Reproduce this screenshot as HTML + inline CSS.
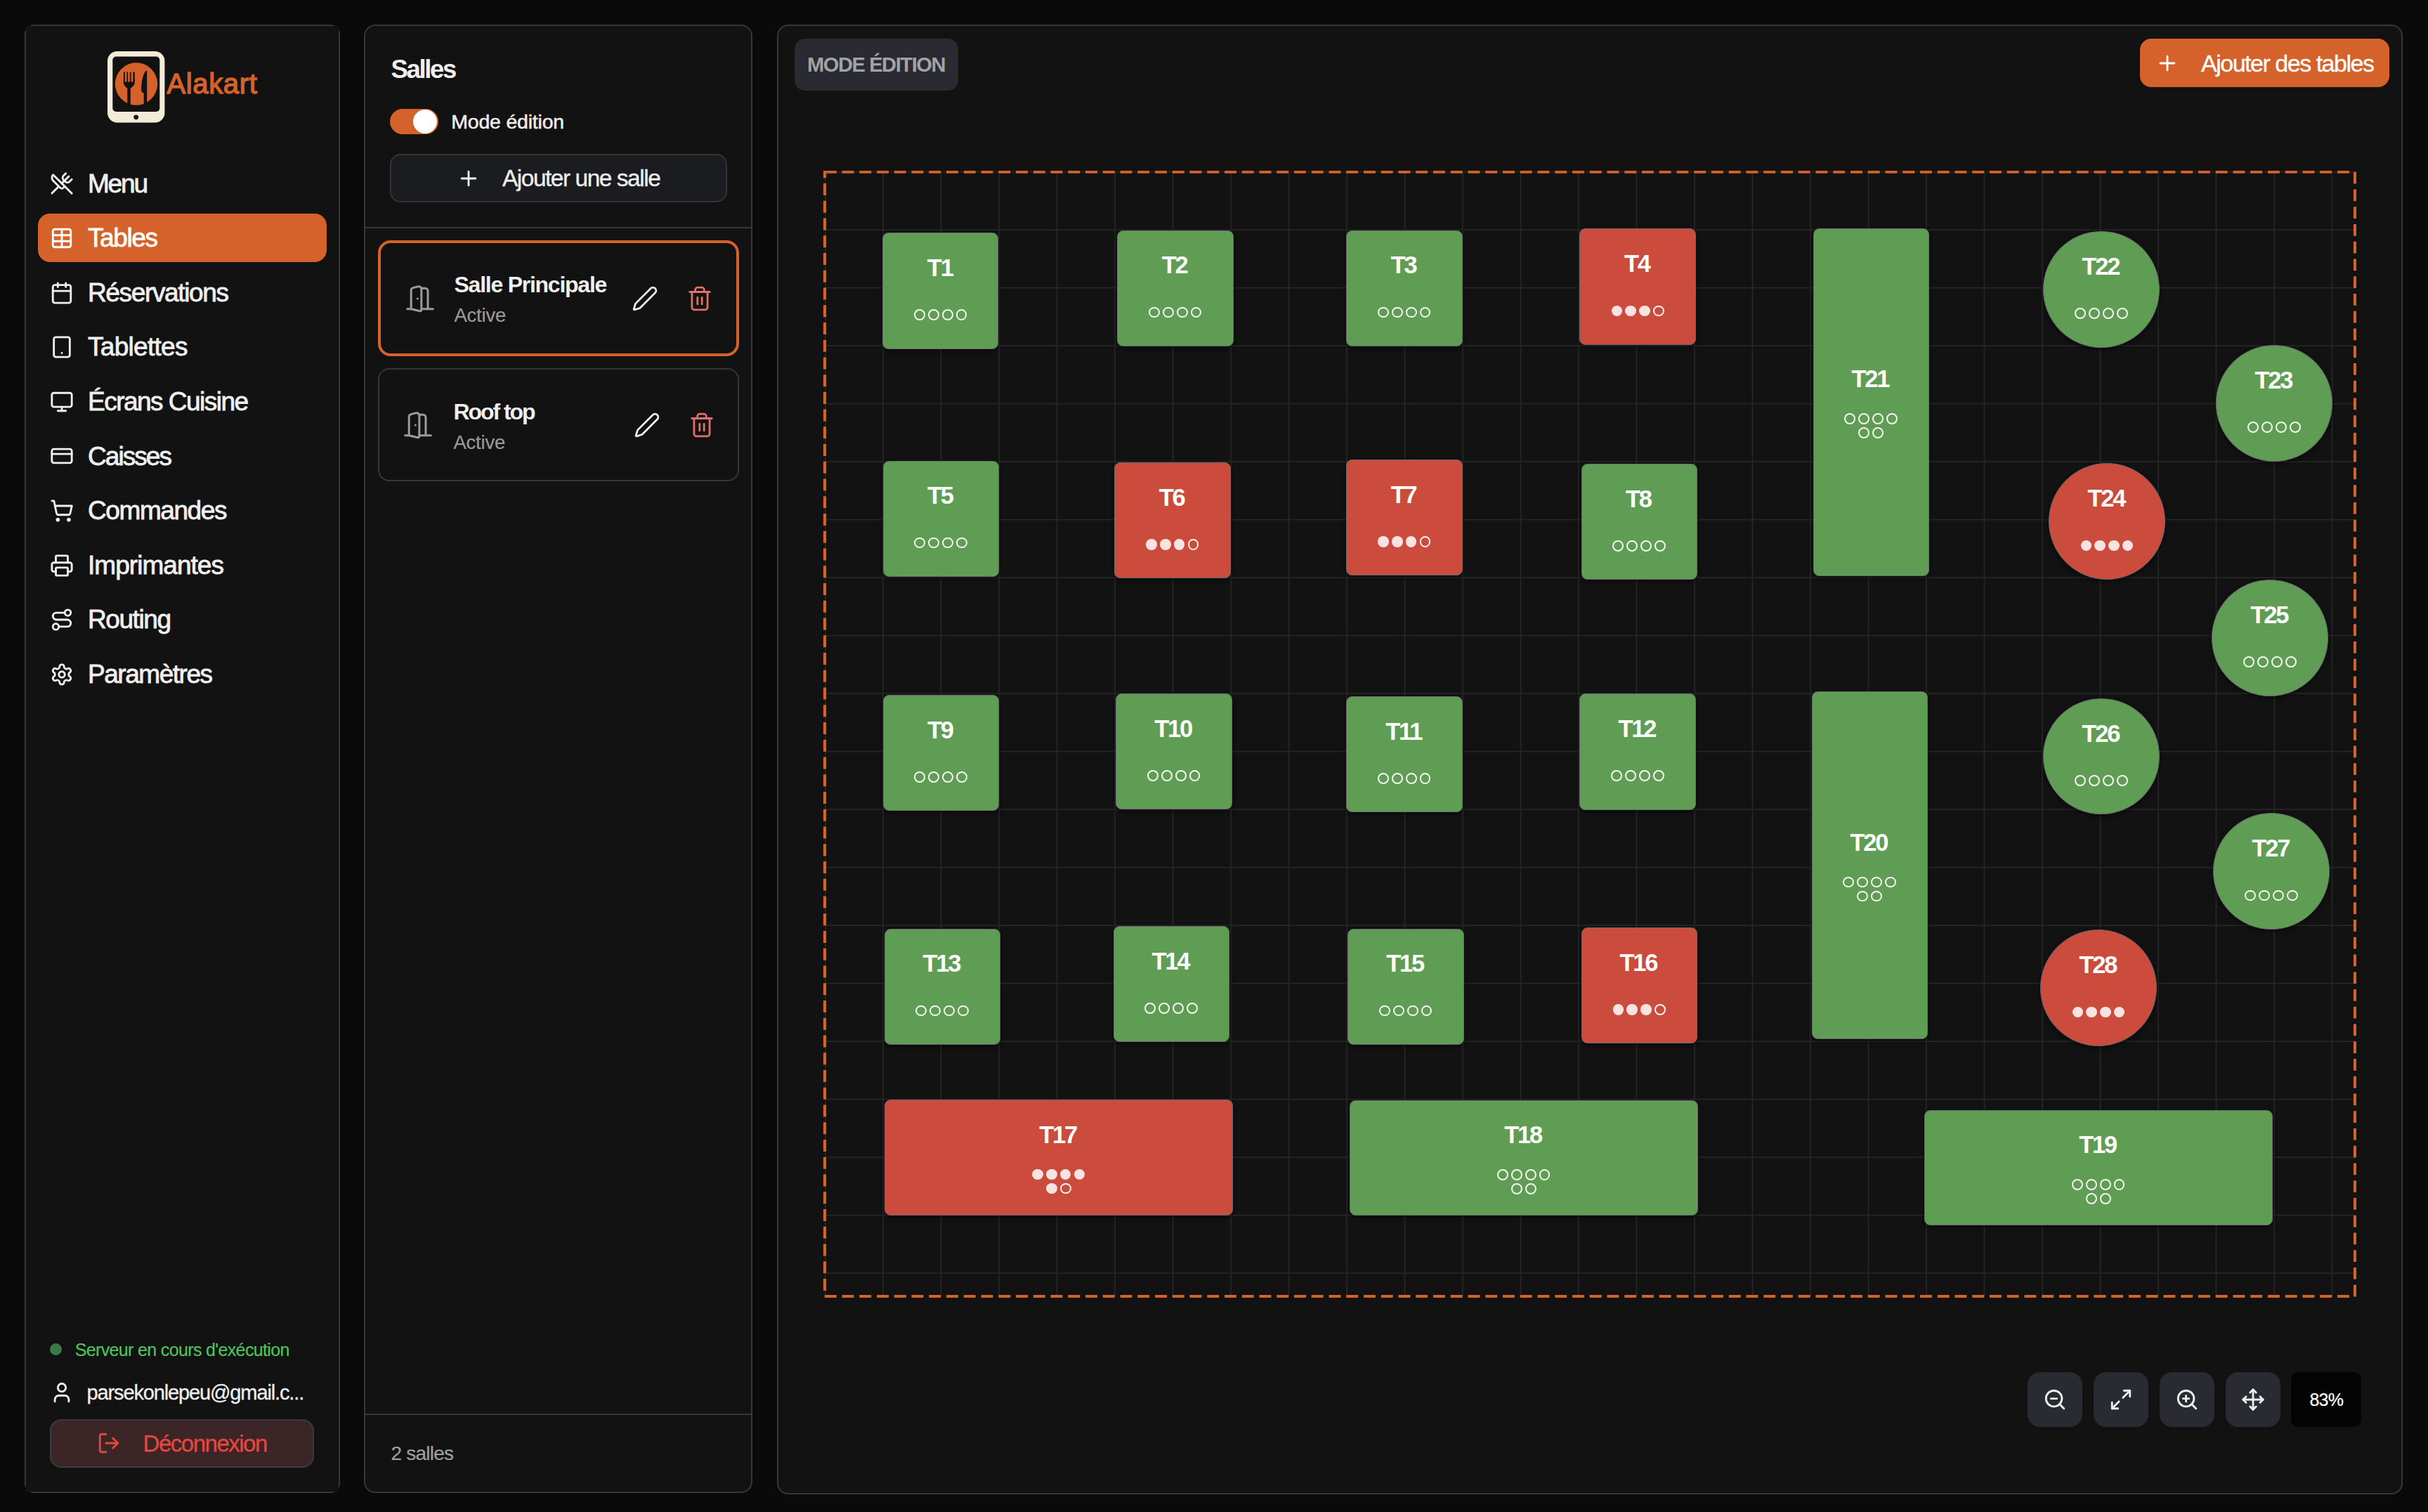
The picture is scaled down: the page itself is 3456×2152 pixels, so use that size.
<!DOCTYPE html>
<html><head><meta charset="utf-8"><style>
html,body{margin:0;padding:0;}
body{width:3456px;height:2152px;background:#0a0a0a;position:relative;overflow:hidden;font-family:"Liberation Sans",sans-serif;}
.b{position:absolute;}
.t{position:absolute;white-space:nowrap;}
.ic{position:absolute;display:block;}
</style></head><body>
<div class="b" style="left:35px;top:35px;width:449px;height:2090px;background:#121212;border:2px solid #36373c;border-radius:14px;box-sizing:border-box"></div>
<div class="b" style="left:37px;top:37px;width:445px;height:2086px;background:#121212"></div>
<div class="b" style="left:518px;top:35px;width:553px;height:2090px;background:#121212;border:2px solid #36373c;border-radius:16px;box-sizing:border-box"></div>
<div class="b" style="left:1106px;top:35px;width:2314px;height:2092px;background:#121212;border:2px solid #36373c;border-radius:16px;box-sizing:border-box"></div>
<svg class="ic" style="left:153px;top:72.5px" width="82" height="102" viewBox="0 0 82 102">
<rect x="0" y="0" width="81.4" height="101.5" rx="14" fill="#f3ead8"/>
<rect x="7.3" y="7.5" width="67" height="78.4" rx="5" fill="#121212"/>
<circle cx="40.7" cy="93.8" r="3.4" fill="#121212"/>
<circle cx="41" cy="46.5" r="30.2" fill="#d5612b"/>
<path fill="#121212" d="M23,29.6 L24.8,29.6 L24.8,43.5 L27.4,43.5 L27.4,29.6 L29.1,29.6 L29.1,43.5 L31.8,43.5 L31.8,29.6 L33.6,29.6 L33.6,43.5 L36.4,43.5 L36.4,29.6 L38.7,29.6 L38.9,44.5 Q38.7,48.5 32.7,52.8 L32.7,80 L28.3,80 L28.3,52.8 Q22.8,48.5 22.8,44.5 Z"/>
<path fill="#121212" d="M56.2,28 L56.2,80 L51.7,80 L51.7,60 L48.2,57 C47.8,45 50,34 54.2,28.2 Q55.6,26.8 56.2,28 Z"/>
</svg>
<div class="t" style="left:237.40px;top:99.04px;font-size:40px;line-height:40px;color:#d5612b;font-weight:400;letter-spacing:0.667px;-webkit-text-stroke:1.4px #d5612b;">Alakart</div>
<div class="b" style="left:54px;top:304px;width:411px;height:69px;background:#d5612b;border-radius:17px"></div>
<svg class="ic" style="left:71.30px;top:244.30px;" width="34" height="34" viewBox="0 0 24 24" fill="none" stroke="#efefef" stroke-width="2" stroke-linecap="round" stroke-linejoin="round"><path d="m16 2-2.3 2.3a3 3 0 0 0 0 4.2l1.8 1.8a3 3 0 0 0 4.2 0L22 8"/><path d="M15 15 3.3 3.3a4.2 4.2 0 0 0 0 6l7.3 7.3c.7.7 2 .7 2.8 0L15 15Zm0 0 7 7"/><path d="m2.1 21.8 6.4-6.3"/><path d="m19 5-7 7"/></svg>
<div class="t" style="left:125.00px;top:242.68px;font-size:37px;line-height:37px;color:#efefef;font-weight:400;letter-spacing:-2.200px;-webkit-text-stroke:0.8px #efefef;">Menu</div>
<svg class="ic" style="left:71.30px;top:321.90px;" width="34" height="34" viewBox="0 0 24 24" fill="none" stroke="#ffffff" stroke-width="2" stroke-linecap="round" stroke-linejoin="round"><path d="M12 3v18"/><rect width="18" height="18" x="3" y="3" rx="2"/><path d="M3 9h18"/><path d="M3 15h18"/></svg>
<div class="t" style="left:125.00px;top:320.28px;font-size:37px;line-height:37px;color:#ffffff;font-weight:400;letter-spacing:-1.400px;-webkit-text-stroke:0.8px #ffffff;">Tables</div>
<svg class="ic" style="left:71.30px;top:399.50px;" width="34" height="34" viewBox="0 0 24 24" fill="none" stroke="#efefef" stroke-width="2" stroke-linecap="round" stroke-linejoin="round"><path d="M8 2v4"/><path d="M16 2v4"/><rect width="18" height="18" x="3" y="4" rx="2"/><path d="M3 10h18"/></svg>
<div class="t" style="left:125.00px;top:397.88px;font-size:37px;line-height:37px;color:#efefef;font-weight:400;letter-spacing:-1.355px;-webkit-text-stroke:0.8px #efefef;">Réservations</div>
<svg class="ic" style="left:71.30px;top:477.10px;" width="34" height="34" viewBox="0 0 24 24" fill="none" stroke="#efefef" stroke-width="2" stroke-linecap="round" stroke-linejoin="round"><rect width="16" height="20" x="4" y="2" rx="2" ry="2"/><line x1="12" x2="12.01" y1="18" y2="18"/></svg>
<div class="t" style="left:125.00px;top:475.48px;font-size:37px;line-height:37px;color:#efefef;font-weight:400;letter-spacing:-0.700px;-webkit-text-stroke:0.8px #efefef;">Tablettes</div>
<svg class="ic" style="left:71.30px;top:554.70px;" width="34" height="34" viewBox="0 0 24 24" fill="none" stroke="#efefef" stroke-width="2" stroke-linecap="round" stroke-linejoin="round"><rect width="20" height="14" x="2" y="3" rx="2"/><line x1="8" x2="16" y1="21" y2="21"/><line x1="12" x2="12" y1="17" y2="21"/></svg>
<div class="t" style="left:125.00px;top:553.08px;font-size:37px;line-height:37px;color:#efefef;font-weight:400;letter-spacing:-1.523px;-webkit-text-stroke:0.8px #efefef;">Écrans Cuisine</div>
<svg class="ic" style="left:71.30px;top:632.30px;" width="34" height="34" viewBox="0 0 24 24" fill="none" stroke="#efefef" stroke-width="2" stroke-linecap="round" stroke-linejoin="round"><rect width="20" height="14" x="2" y="5" rx="2"/><line x1="2" x2="22" y1="10" y2="10"/></svg>
<div class="t" style="left:125.00px;top:630.68px;font-size:37px;line-height:37px;color:#efefef;font-weight:400;letter-spacing:-1.933px;-webkit-text-stroke:0.8px #efefef;">Caisses</div>
<svg class="ic" style="left:71.30px;top:709.90px;" width="34" height="34" viewBox="0 0 24 24" fill="none" stroke="#efefef" stroke-width="2" stroke-linecap="round" stroke-linejoin="round"><circle cx="8" cy="21" r="1"/><circle cx="19" cy="21" r="1"/><path d="M2.05 2.05h2l2.66 12.42a2 2 0 0 0 2 1.58h9.78a2 2 0 0 0 1.95-1.57l1.65-7.43H5.12"/></svg>
<div class="t" style="left:125.00px;top:708.28px;font-size:37px;line-height:37px;color:#efefef;font-weight:400;letter-spacing:-1.413px;-webkit-text-stroke:0.8px #efefef;">Commandes</div>
<svg class="ic" style="left:71.30px;top:787.50px;" width="34" height="34" viewBox="0 0 24 24" fill="none" stroke="#efefef" stroke-width="2" stroke-linecap="round" stroke-linejoin="round"><path d="M6 18H4a2 2 0 0 1-2-2v-5a2 2 0 0 1 2-2h16a2 2 0 0 1 2 2v5a2 2 0 0 1-2 2h-2"/><path d="M6 9V3a1 1 0 0 1 1-1h10a1 1 0 0 1 1 1v6"/><rect x="6" y="14" width="12" height="8" rx="1"/></svg>
<div class="t" style="left:125.00px;top:785.88px;font-size:37px;line-height:37px;color:#efefef;font-weight:400;letter-spacing:-0.960px;-webkit-text-stroke:0.8px #efefef;">Imprimantes</div>
<svg class="ic" style="left:71.30px;top:865.10px;" width="34" height="34" viewBox="0 0 24 24" fill="none" stroke="#efefef" stroke-width="2" stroke-linecap="round" stroke-linejoin="round"><circle cx="6" cy="19" r="3"/><path d="M9 19h8.5a3.5 3.5 0 0 0 0-7h-11a3.5 3.5 0 0 1 0-7H15"/><circle cx="18" cy="5" r="3"/></svg>
<div class="t" style="left:125.00px;top:863.48px;font-size:37px;line-height:37px;color:#efefef;font-weight:400;letter-spacing:-1.417px;-webkit-text-stroke:0.8px #efefef;">Routing</div>
<svg class="ic" style="left:71.30px;top:942.70px;" width="34" height="34" viewBox="0 0 24 24" fill="none" stroke="#efefef" stroke-width="2" stroke-linecap="round" stroke-linejoin="round"><path d="M12.22 2h-.44a2 2 0 0 0-2 2v.18a2 2 0 0 1-1 1.73l-.43.25a2 2 0 0 1-2 0l-.15-.08a2 2 0 0 0-2.73.73l-.22.38a2 2 0 0 0 .73 2.73l.15.1a2 2 0 0 1 1 1.72v.51a2 2 0 0 1-1 1.74l-.15.09a2 2 0 0 0-.73 2.73l.22.38a2 2 0 0 0 2.73.73l.15-.08a2 2 0 0 1 2 0l.43.25a2 2 0 0 1 1 1.73V20a2 2 0 0 0 2 2h.44a2 2 0 0 0 2-2v-.18a2 2 0 0 1 1-1.73l.43-.25a2 2 0 0 1 2 0l.15.08a2 2 0 0 0 2.73-.73l.22-.39a2 2 0 0 0-.73-2.73l-.15-.08a2 2 0 0 1-1-1.74v-.5a2 2 0 0 1 1-1.74l.15-.09a2 2 0 0 0 .73-2.73l-.22-.38a2 2 0 0 0-2.73-.73l-.15.08a2 2 0 0 1-2 0l-.43-.25a2 2 0 0 1-1-1.73V4a2 2 0 0 0-2-2z"/><circle cx="12" cy="12" r="3"/></svg>
<div class="t" style="left:125.00px;top:941.08px;font-size:37px;line-height:37px;color:#efefef;font-weight:400;letter-spacing:-1.467px;-webkit-text-stroke:0.8px #efefef;">Paramètres</div>
<div class="b" style="left:70.8px;top:1912px;width:17.2px;height:17.2px;background:#3b7a44;border-radius:50%"></div>
<div class="t" style="left:106.70px;top:1908.94px;font-size:25px;line-height:25px;color:#4fc35c;font-weight:400;letter-spacing:-0.641px;-webkit-text-stroke:0.2px #4fc35c;">Serveur en cours d'exécution</div>
<svg class="ic" style="left:71.00px;top:1965.00px;" width="34" height="34" viewBox="0 0 24 24" fill="none" stroke="#efefef" stroke-width="2" stroke-linecap="round" stroke-linejoin="round"><path d="M19 21v-2a4 4 0 0 0-4-4H9a4 4 0 0 0-4 4v2"/><circle cx="12" cy="7" r="4"/></svg>
<div class="t" style="left:123.50px;top:1968.35px;font-size:29px;line-height:29px;color:#efefef;font-weight:400;letter-spacing:-1.130px;-webkit-text-stroke:0.3px #efefef;">parsekonlepeu@gmail.c...</div>
<div class="b" style="left:71px;top:2020px;width:376px;height:69px;background:#3c2527;border:2px solid #3a3a40;border-radius:16px;box-sizing:border-box"></div>
<svg class="ic" style="left:137.50px;top:2037.30px;" width="34" height="34" viewBox="0 0 24 24" fill="none" stroke="#e5473f" stroke-width="2" stroke-linecap="round" stroke-linejoin="round"><path d="M9 21H5a2 2 0 0 1-2-2V5a2 2 0 0 1 2-2h4"/><polyline points="16 17 21 12 16 7"/><line x1="21" x2="9" y1="12" y2="12"/></svg>
<div class="t" style="left:203.60px;top:2038.17px;font-size:33px;line-height:33px;color:#e5473f;font-weight:400;letter-spacing:-1.490px;-webkit-text-stroke:0.3px #e5473f;">Déconnexion</div>
<div class="t" style="left:556.40px;top:81.00px;font-size:36.5px;line-height:36.5px;color:#efefef;font-weight:700;letter-spacing:-2.320px;">Salles</div>
<div class="b" style="left:555px;top:155px;width:69px;height:36px;background:#d5612b;border-radius:18px"></div>
<div class="b" style="left:587.6px;top:156.4px;width:34px;height:34px;background:#ffffff;border-radius:50%"></div>
<div class="t" style="left:642.20px;top:158.77px;font-size:28.5px;line-height:28.5px;color:#efefef;font-weight:400;letter-spacing:-0.200px;-webkit-text-stroke:0.5px #efefef;">Mode édition</div>
<div class="b" style="left:555px;top:219px;width:480px;height:68.5px;background:#1b1c1f;border:2px solid #323338;border-radius:15px;box-sizing:border-box"></div>
<svg class="ic" style="left:649.50px;top:236.70px;" width="34" height="34" viewBox="0 0 24 24" fill="none" stroke="#efefef" stroke-width="2" stroke-linecap="round" stroke-linejoin="round"><path d="M5 12h14"/><path d="M12 5v14"/></svg>
<div class="t" style="left:714.90px;top:236.84px;font-size:33.5px;line-height:33.5px;color:#efefef;font-weight:400;letter-spacing:-1.475px;-webkit-text-stroke:0.3px #efefef;">Ajouter une salle</div>
<div class="b" style="left:519px;top:323px;width:551px;height:2px;background:#36373c"></div>
<div class="b" style="left:538px;top:342px;width:514px;height:165px;border:4px solid #d5612b;border-radius:18px;box-sizing:border-box"></div>
<div class="b" style="left:538px;top:524px;width:514px;height:161px;border:2px solid #36373c;border-radius:16px;box-sizing:border-box"></div>
<svg class="ic" style="left:575.50px;top:403.00px;" width="44" height="44" viewBox="0 0 24 24" fill="none" stroke="#9b9b9b" stroke-width="1.65" stroke-linecap="round" stroke-linejoin="round"><path d="M13 4h3a2 2 0 0 1 2 2v14"/><path d="M2 20h3"/><path d="M13 20h9"/><path d="M10 12v.01"/><path d="M13 4.562v16.157a1 1 0 0 1-1.242.97L5 20V5.562a2 2 0 0 1 1.515-1.94l4-1A2 2 0 0 1 13 4.561Z"/></svg>
<div class="t" style="left:646.50px;top:388.91px;font-size:32px;line-height:32px;color:#efefef;font-weight:700;letter-spacing:-1.247px;">Salle Principale</div>
<div class="t" style="left:646.50px;top:434.52px;font-size:27.5px;line-height:27.5px;color:#9a9a9a;font-weight:400;letter-spacing:-0.240px;-webkit-text-stroke:0.2px #9a9a9a;">Active</div>
<svg class="ic" style="left:899.20px;top:405.50px;" width="38" height="38" viewBox="0 0 24 24" fill="none" stroke="#efefef" stroke-width="1.75" stroke-linecap="round" stroke-linejoin="round"><path d="M21.174 6.812a1 1 0 0 0-3.986-3.987L3.842 16.174a2 2 0 0 0-.5.83l-1.321 4.352a.5.5 0 0 0 .623.622l4.353-1.32a2 2 0 0 0 .83-.497z"/></svg>
<svg class="ic" style="left:977.30px;top:405.50px;" width="38" height="38" viewBox="0 0 24 24" fill="none" stroke="#e0706a" stroke-width="1.75" stroke-linecap="round" stroke-linejoin="round"><path d="M3 6h18"/><path d="M19 6v14c0 1-1 2-2 2H7c-1 0-2-1-2-2V6"/><path d="M8 6V4c0-1 1-2 2-2h4c1 0 2 1 2 2v2"/><line x1="10" x2="10" y1="11" y2="17"/><line x1="14" x2="14" y1="11" y2="17"/></svg>
<svg class="ic" style="left:573.30px;top:583.30px;" width="44" height="44" viewBox="0 0 24 24" fill="none" stroke="#9b9b9b" stroke-width="1.65" stroke-linecap="round" stroke-linejoin="round"><path d="M13 4h3a2 2 0 0 1 2 2v14"/><path d="M2 20h3"/><path d="M13 20h9"/><path d="M10 12v.01"/><path d="M13 4.562v16.157a1 1 0 0 1-1.242.97L5 20V5.562a2 2 0 0 1 1.515-1.94l4-1A2 2 0 0 1 13 4.561Z"/></svg>
<div class="t" style="left:645.50px;top:569.91px;font-size:32px;line-height:32px;color:#efefef;font-weight:700;letter-spacing:-2.071px;">Roof top</div>
<div class="t" style="left:645.50px;top:615.52px;font-size:27.5px;line-height:27.5px;color:#9a9a9a;font-weight:400;letter-spacing:-0.240px;-webkit-text-stroke:0.2px #9a9a9a;">Active</div>
<svg class="ic" style="left:901.50px;top:585.80px;" width="38" height="38" viewBox="0 0 24 24" fill="none" stroke="#efefef" stroke-width="1.75" stroke-linecap="round" stroke-linejoin="round"><path d="M21.174 6.812a1 1 0 0 0-3.986-3.987L3.842 16.174a2 2 0 0 0-.5.83l-1.321 4.352a.5.5 0 0 0 .623.622l4.353-1.32a2 2 0 0 0 .83-.497z"/></svg>
<svg class="ic" style="left:979.50px;top:585.80px;" width="38" height="38" viewBox="0 0 24 24" fill="none" stroke="#e0706a" stroke-width="1.75" stroke-linecap="round" stroke-linejoin="round"><path d="M3 6h18"/><path d="M19 6v14c0 1-1 2-2 2H7c-1 0-2-1-2-2V6"/><path d="M8 6V4c0-1 1-2 2-2h4c1 0 2 1 2 2v2"/><line x1="10" x2="10" y1="11" y2="17"/><line x1="14" x2="14" y1="11" y2="17"/></svg>
<div class="b" style="left:519px;top:2011.5px;width:551px;height:2px;background:#36373c"></div>
<div class="t" style="left:556.50px;top:2054.80px;font-size:28px;line-height:28px;color:#a0a0a0;font-weight:400;letter-spacing:-0.771px;-webkit-text-stroke:0.2px #a0a0a0;">2 salles</div>
<div class="b" style="left:1131px;top:55px;width:233px;height:73.5px;background:#2a2a33;border-radius:15px"></div>
<div class="t" style="left:1149.00px;top:77.95px;font-size:29px;line-height:29px;color:#a3a3a3;font-weight:700;letter-spacing:-1.382px;">MODE ÉDITION</div>
<div class="b" style="left:3046px;top:55px;width:355px;height:69px;background:#d5612b;border-radius:16px"></div>
<svg class="ic" style="left:3067.50px;top:72.50px;" width="34" height="34" viewBox="0 0 24 24" fill="none" stroke="#ffffff" stroke-width="2" stroke-linecap="round" stroke-linejoin="round"><path d="M5 12h14"/><path d="M12 5v14"/></svg>
<div class="t" style="left:3133.00px;top:72.52px;font-size:34px;line-height:34px;color:#ffffff;font-weight:400;letter-spacing:-1.482px;-webkit-text-stroke:0.3px #ffffff;">Ajouter des tables</div>
<svg class="ic" style="left:1174px;top:244.8px;overflow:visible" width="2178" height="1600.2"><g stroke="#262626" stroke-width="1.8"><line x1="0.5" y1="0" x2="0.5" y2="1600.2"/><line x1="83.0" y1="0" x2="83.0" y2="1600.2"/><line x1="165.5" y1="0" x2="165.5" y2="1600.2"/><line x1="248.0" y1="0" x2="248.0" y2="1600.2"/><line x1="330.5" y1="0" x2="330.5" y2="1600.2"/><line x1="413.0" y1="0" x2="413.0" y2="1600.2"/><line x1="495.5" y1="0" x2="495.5" y2="1600.2"/><line x1="578.0" y1="0" x2="578.0" y2="1600.2"/><line x1="660.5" y1="0" x2="660.5" y2="1600.2"/><line x1="743.0" y1="0" x2="743.0" y2="1600.2"/><line x1="825.5" y1="0" x2="825.5" y2="1600.2"/><line x1="908.0" y1="0" x2="908.0" y2="1600.2"/><line x1="990.5" y1="0" x2="990.5" y2="1600.2"/><line x1="1073.0" y1="0" x2="1073.0" y2="1600.2"/><line x1="1155.5" y1="0" x2="1155.5" y2="1600.2"/><line x1="1238.0" y1="0" x2="1238.0" y2="1600.2"/><line x1="1320.5" y1="0" x2="1320.5" y2="1600.2"/><line x1="1403.0" y1="0" x2="1403.0" y2="1600.2"/><line x1="1485.5" y1="0" x2="1485.5" y2="1600.2"/><line x1="1568.0" y1="0" x2="1568.0" y2="1600.2"/><line x1="1650.5" y1="0" x2="1650.5" y2="1600.2"/><line x1="1733.0" y1="0" x2="1733.0" y2="1600.2"/><line x1="1815.5" y1="0" x2="1815.5" y2="1600.2"/><line x1="1898.0" y1="0" x2="1898.0" y2="1600.2"/><line x1="1980.5" y1="0" x2="1980.5" y2="1600.2"/><line x1="2063.0" y1="0" x2="2063.0" y2="1600.2"/><line x1="2145.5" y1="0" x2="2145.5" y2="1600.2"/><line x1="0" y1="-0.30000000000001137" x2="2178" y2="-0.30000000000001137"/><line x1="0" y1="82.19999999999999" x2="2178" y2="82.19999999999999"/><line x1="0" y1="164.7" x2="2178" y2="164.7"/><line x1="0" y1="247.2" x2="2178" y2="247.2"/><line x1="0" y1="329.7" x2="2178" y2="329.7"/><line x1="0" y1="412.2" x2="2178" y2="412.2"/><line x1="0" y1="494.7" x2="2178" y2="494.7"/><line x1="0" y1="577.2" x2="2178" y2="577.2"/><line x1="0" y1="659.7" x2="2178" y2="659.7"/><line x1="0" y1="742.2" x2="2178" y2="742.2"/><line x1="0" y1="824.7" x2="2178" y2="824.7"/><line x1="0" y1="907.2" x2="2178" y2="907.2"/><line x1="0" y1="989.7" x2="2178" y2="989.7"/><line x1="0" y1="1072.2" x2="2178" y2="1072.2"/><line x1="0" y1="1154.7" x2="2178" y2="1154.7"/><line x1="0" y1="1237.2" x2="2178" y2="1237.2"/><line x1="0" y1="1319.7" x2="2178" y2="1319.7"/><line x1="0" y1="1402.2" x2="2178" y2="1402.2"/><line x1="0" y1="1484.7" x2="2178" y2="1484.7"/><line x1="0" y1="1567.2" x2="2178" y2="1567.2"/></g></svg>
<svg class="ic" style="left:0;top:0" width="3456" height="2152"><path fill="#d5612b" d="M1171.90 242.90H1190.70V246.70H1171.90ZM1173.80 1843.00H1190.70V1847.00H1173.80ZM1198.55 242.90H1215.45V246.70H1198.55ZM1198.55 1843.00H1215.45V1847.00H1198.55ZM1223.30 242.90H1240.20V246.70H1223.30ZM1223.30 1843.00H1240.20V1847.00H1223.30ZM1248.05 242.90H1264.95V246.70H1248.05ZM1248.05 1843.00H1264.95V1847.00H1248.05ZM1272.80 242.90H1289.70V246.70H1272.80ZM1272.80 1843.00H1289.70V1847.00H1272.80ZM1297.54 242.90H1314.44V246.70H1297.54ZM1297.54 1843.00H1314.44V1847.00H1297.54ZM1322.29 242.90H1339.19V246.70H1322.29ZM1322.29 1843.00H1339.19V1847.00H1322.29ZM1347.04 242.90H1363.94V246.70H1347.04ZM1347.04 1843.00H1363.94V1847.00H1347.04ZM1371.79 242.90H1388.69V246.70H1371.79ZM1371.79 1843.00H1388.69V1847.00H1371.79ZM1396.54 242.90H1413.44V246.70H1396.54ZM1396.54 1843.00H1413.44V1847.00H1396.54ZM1421.29 242.90H1438.19V246.70H1421.29ZM1421.29 1843.00H1438.19V1847.00H1421.29ZM1446.04 242.90H1462.94V246.70H1446.04ZM1446.04 1843.00H1462.94V1847.00H1446.04ZM1470.79 242.90H1487.69V246.70H1470.79ZM1470.79 1843.00H1487.69V1847.00H1470.79ZM1495.54 242.90H1512.44V246.70H1495.54ZM1495.54 1843.00H1512.44V1847.00H1495.54ZM1520.29 242.90H1537.19V246.70H1520.29ZM1520.29 1843.00H1537.19V1847.00H1520.29ZM1545.03 242.90H1561.93V246.70H1545.03ZM1545.03 1843.00H1561.93V1847.00H1545.03ZM1569.78 242.90H1586.68V246.70H1569.78ZM1569.78 1843.00H1586.68V1847.00H1569.78ZM1594.53 242.90H1611.43V246.70H1594.53ZM1594.53 1843.00H1611.43V1847.00H1594.53ZM1619.28 242.90H1636.18V246.70H1619.28ZM1619.28 1843.00H1636.18V1847.00H1619.28ZM1644.03 242.90H1660.93V246.70H1644.03ZM1644.03 1843.00H1660.93V1847.00H1644.03ZM1668.78 242.90H1685.68V246.70H1668.78ZM1668.78 1843.00H1685.68V1847.00H1668.78ZM1693.53 242.90H1710.43V246.70H1693.53ZM1693.53 1843.00H1710.43V1847.00H1693.53ZM1718.28 242.90H1735.18V246.70H1718.28ZM1718.28 1843.00H1735.18V1847.00H1718.28ZM1743.03 242.90H1759.93V246.70H1743.03ZM1743.03 1843.00H1759.93V1847.00H1743.03ZM1767.78 242.90H1784.68V246.70H1767.78ZM1767.78 1843.00H1784.68V1847.00H1767.78ZM1792.53 242.90H1809.43V246.70H1792.53ZM1792.53 1843.00H1809.43V1847.00H1792.53ZM1817.27 242.90H1834.17V246.70H1817.27ZM1817.27 1843.00H1834.17V1847.00H1817.27ZM1842.02 242.90H1858.92V246.70H1842.02ZM1842.02 1843.00H1858.92V1847.00H1842.02ZM1866.77 242.90H1883.67V246.70H1866.77ZM1866.77 1843.00H1883.67V1847.00H1866.77ZM1891.52 242.90H1908.42V246.70H1891.52ZM1891.52 1843.00H1908.42V1847.00H1891.52ZM1916.27 242.90H1933.17V246.70H1916.27ZM1916.27 1843.00H1933.17V1847.00H1916.27ZM1941.02 242.90H1957.92V246.70H1941.02ZM1941.02 1843.00H1957.92V1847.00H1941.02ZM1965.77 242.90H1982.67V246.70H1965.77ZM1965.77 1843.00H1982.67V1847.00H1965.77ZM1990.52 242.90H2007.42V246.70H1990.52ZM1990.52 1843.00H2007.42V1847.00H1990.52ZM2015.27 242.90H2032.17V246.70H2015.27ZM2015.27 1843.00H2032.17V1847.00H2015.27ZM2040.01 242.90H2056.91V246.70H2040.01ZM2040.01 1843.00H2056.91V1847.00H2040.01ZM2064.76 242.90H2081.66V246.70H2064.76ZM2064.76 1843.00H2081.66V1847.00H2064.76ZM2089.51 242.90H2106.41V246.70H2089.51ZM2089.51 1843.00H2106.41V1847.00H2089.51ZM2114.26 242.90H2131.16V246.70H2114.26ZM2114.26 1843.00H2131.16V1847.00H2114.26ZM2139.01 242.90H2155.91V246.70H2139.01ZM2139.01 1843.00H2155.91V1847.00H2139.01ZM2163.76 242.90H2180.66V246.70H2163.76ZM2163.76 1843.00H2180.66V1847.00H2163.76ZM2188.51 242.90H2205.41V246.70H2188.51ZM2188.51 1843.00H2205.41V1847.00H2188.51ZM2213.26 242.90H2230.16V246.70H2213.26ZM2213.26 1843.00H2230.16V1847.00H2213.26ZM2238.01 242.90H2254.91V246.70H2238.01ZM2238.01 1843.00H2254.91V1847.00H2238.01ZM2262.76 242.90H2279.66V246.70H2262.76ZM2262.76 1843.00H2279.66V1847.00H2262.76ZM2287.51 242.90H2304.41V246.70H2287.51ZM2287.51 1843.00H2304.41V1847.00H2287.51ZM2312.25 242.90H2329.15V246.70H2312.25ZM2312.25 1843.00H2329.15V1847.00H2312.25ZM2337.00 242.90H2353.90V246.70H2337.00ZM2337.00 1843.00H2353.90V1847.00H2337.00ZM2361.75 242.90H2378.65V246.70H2361.75ZM2361.75 1843.00H2378.65V1847.00H2361.75ZM2386.50 242.90H2403.40V246.70H2386.50ZM2386.50 1843.00H2403.40V1847.00H2386.50ZM2411.25 242.90H2428.15V246.70H2411.25ZM2411.25 1843.00H2428.15V1847.00H2411.25ZM2436.00 242.90H2452.90V246.70H2436.00ZM2436.00 1843.00H2452.90V1847.00H2436.00ZM2460.75 242.90H2477.65V246.70H2460.75ZM2460.75 1843.00H2477.65V1847.00H2460.75ZM2485.50 242.90H2502.40V246.70H2485.50ZM2485.50 1843.00H2502.40V1847.00H2485.50ZM2510.25 242.90H2527.15V246.70H2510.25ZM2510.25 1843.00H2527.15V1847.00H2510.25ZM2534.99 242.90H2551.89V246.70H2534.99ZM2534.99 1843.00H2551.89V1847.00H2534.99ZM2559.74 242.90H2576.64V246.70H2559.74ZM2559.74 1843.00H2576.64V1847.00H2559.74ZM2584.49 242.90H2601.39V246.70H2584.49ZM2584.49 1843.00H2601.39V1847.00H2584.49ZM2609.24 242.90H2626.14V246.70H2609.24ZM2609.24 1843.00H2626.14V1847.00H2609.24ZM2633.99 242.90H2650.89V246.70H2633.99ZM2633.99 1843.00H2650.89V1847.00H2633.99ZM2658.74 242.90H2675.64V246.70H2658.74ZM2658.74 1843.00H2675.64V1847.00H2658.74ZM2683.49 242.90H2700.39V246.70H2683.49ZM2683.49 1843.00H2700.39V1847.00H2683.49ZM2708.24 242.90H2725.14V246.70H2708.24ZM2708.24 1843.00H2725.14V1847.00H2708.24ZM2732.99 242.90H2749.89V246.70H2732.99ZM2732.99 1843.00H2749.89V1847.00H2732.99ZM2757.74 242.90H2774.64V246.70H2757.74ZM2757.74 1843.00H2774.64V1847.00H2757.74ZM2782.48 242.90H2799.38V246.70H2782.48ZM2782.48 1843.00H2799.38V1847.00H2782.48ZM2807.23 242.90H2824.13V246.70H2807.23ZM2807.23 1843.00H2824.13V1847.00H2807.23ZM2831.98 242.90H2848.88V246.70H2831.98ZM2831.98 1843.00H2848.88V1847.00H2831.98ZM2856.73 242.90H2873.63V246.70H2856.73ZM2856.73 1843.00H2873.63V1847.00H2856.73ZM2881.48 242.90H2898.38V246.70H2881.48ZM2881.48 1843.00H2898.38V1847.00H2881.48ZM2906.23 242.90H2923.13V246.70H2906.23ZM2906.23 1843.00H2923.13V1847.00H2906.23ZM2930.98 242.90H2947.88V246.70H2930.98ZM2930.98 1843.00H2947.88V1847.00H2930.98ZM2955.73 242.90H2972.63V246.70H2955.73ZM2955.73 1843.00H2972.63V1847.00H2955.73ZM2980.48 242.90H2997.38V246.70H2980.48ZM2980.48 1843.00H2997.38V1847.00H2980.48ZM3005.23 242.90H3022.13V246.70H3005.23ZM3005.23 1843.00H3022.13V1847.00H3005.23ZM3029.97 242.90H3046.88V246.70H3029.97ZM3029.97 1843.00H3046.88V1847.00H3029.97ZM3054.72 242.90H3071.62V246.70H3054.72ZM3054.72 1843.00H3071.62V1847.00H3054.72ZM3079.47 242.90H3096.37V246.70H3079.47ZM3079.47 1843.00H3096.37V1847.00H3079.47ZM3104.22 242.90H3121.12V246.70H3104.22ZM3104.22 1843.00H3121.12V1847.00H3104.22ZM3128.97 242.90H3145.87V246.70H3128.97ZM3128.97 1843.00H3145.87V1847.00H3128.97ZM3153.72 242.90H3170.62V246.70H3153.72ZM3153.72 1843.00H3170.62V1847.00H3153.72ZM3178.47 242.90H3195.37V246.70H3178.47ZM3178.47 1843.00H3195.37V1847.00H3178.47ZM3203.22 242.90H3220.12V246.70H3203.22ZM3203.22 1843.00H3220.12V1847.00H3203.22ZM3227.97 242.90H3244.87V246.70H3227.97ZM3227.97 1843.00H3244.87V1847.00H3227.97ZM3252.72 242.90H3269.62V246.70H3252.72ZM3252.72 1843.00H3269.62V1847.00H3252.72ZM3277.47 242.90H3294.37V246.70H3277.47ZM3277.47 1843.00H3294.37V1847.00H3277.47ZM3302.21 242.90H3319.11V246.70H3302.21ZM3302.21 1843.00H3319.11V1847.00H3302.21ZM3326.96 242.90H3343.86V246.70H3326.96ZM3326.96 1843.00H3343.86V1847.00H3326.96ZM1171.90 243.00H1176.10V253.15H1171.90ZM1171.90 260.90H1176.10V277.90H1171.90ZM1171.90 285.65H1176.10V302.65H1171.90ZM1171.90 310.40H1176.10V327.40H1171.90ZM1171.90 335.14H1176.10V352.14H1171.90ZM1171.90 359.89H1176.10V376.89H1171.90ZM1171.90 384.64H1176.10V401.64H1171.90ZM1171.90 409.39H1176.10V426.39H1171.90ZM1171.90 434.14H1176.10V451.14H1171.90ZM1171.90 458.88H1176.10V475.88H1171.90ZM1171.90 483.63H1176.10V500.63H1171.90ZM1171.90 508.38H1176.10V525.38H1171.90ZM1171.90 533.13H1176.10V550.13H1171.90ZM1171.90 557.88H1176.10V574.88H1171.90ZM1171.90 582.62H1176.10V599.62H1171.90ZM1171.90 607.37H1176.10V624.37H1171.90ZM1171.90 632.12H1176.10V649.12H1171.90ZM1171.90 656.87H1176.10V673.87H1171.90ZM1171.90 681.62H1176.10V698.62H1171.90ZM1171.90 706.36H1176.10V723.36H1171.90ZM1171.90 731.11H1176.10V748.11H1171.90ZM1171.90 755.86H1176.10V772.86H1171.90ZM1171.90 780.61H1176.10V797.61H1171.90ZM1171.90 805.36H1176.10V822.36H1171.90ZM1171.90 830.10H1176.10V847.10H1171.90ZM1171.90 854.85H1176.10V871.85H1171.90ZM1171.90 879.60H1176.10V896.60H1171.90ZM1171.90 904.35H1176.10V921.35H1171.90ZM1171.90 929.10H1176.10V946.10H1171.90ZM1171.90 953.84H1176.10V970.84H1171.90ZM1171.90 978.59H1176.10V995.59H1171.90ZM1171.90 1003.34H1176.10V1020.34H1171.90ZM1171.90 1028.09H1176.10V1045.09H1171.90ZM1171.90 1052.84H1176.10V1069.84H1171.90ZM1171.90 1077.58H1176.10V1094.58H1171.90ZM1171.90 1102.33H1176.10V1119.33H1171.90ZM1171.90 1127.08H1176.10V1144.08H1171.90ZM1171.90 1151.83H1176.10V1168.83H1171.90ZM1171.90 1176.58H1176.10V1193.58H1171.90ZM1171.90 1201.32H1176.10V1218.32H1171.90ZM1171.90 1226.07H1176.10V1243.07H1171.90ZM1171.90 1250.82H1176.10V1267.82H1171.90ZM1171.90 1275.57H1176.10V1292.57H1171.90ZM1171.90 1300.32H1176.10V1317.32H1171.90ZM1171.90 1325.06H1176.10V1342.06H1171.90ZM1171.90 1349.81H1176.10V1366.81H1171.90ZM1171.90 1374.56H1176.10V1391.56H1171.90ZM1171.90 1399.31H1176.10V1416.31H1171.90ZM1171.90 1424.06H1176.10V1441.06H1171.90ZM1171.90 1448.80H1176.10V1465.80H1171.90ZM1171.90 1473.55H1176.10V1490.55H1171.90ZM1171.90 1498.30H1176.10V1515.30H1171.90ZM1171.90 1523.05H1176.10V1540.05H1171.90ZM1171.90 1547.80H1176.10V1564.80H1171.90ZM1171.90 1572.54H1176.10V1589.54H1171.90ZM1171.90 1597.29H1176.10V1614.29H1171.90ZM1171.90 1622.04H1176.10V1639.04H1171.90ZM1171.90 1646.79H1176.10V1663.79H1171.90ZM1171.90 1671.54H1176.10V1688.54H1171.90ZM1171.90 1696.28H1176.10V1713.28H1171.90ZM1171.90 1721.03H1176.10V1738.03H1171.90ZM1171.90 1745.78H1176.10V1762.78H1171.90ZM1171.90 1770.53H1176.10V1787.53H1171.90ZM1171.90 1795.28H1176.10V1812.28H1171.90ZM1171.90 1820.02H1176.10V1837.02H1171.90ZM3349.90 244.70H3354.00V261.40H3349.90ZM3349.90 269.45H3354.00V286.15H3349.90ZM3349.90 294.20H3354.00V310.90H3349.90ZM3349.90 318.95H3354.00V335.65H3349.90ZM3349.90 343.70H3354.00V360.40H3349.90ZM3349.90 368.45H3354.00V385.15H3349.90ZM3349.90 393.20H3354.00V409.90H3349.90ZM3349.90 417.95H3354.00V434.65H3349.90ZM3349.90 442.70H3354.00V459.40H3349.90ZM3349.90 467.45H3354.00V484.15H3349.90ZM3349.90 492.20H3354.00V508.90H3349.90ZM3349.90 516.95H3354.00V533.65H3349.90ZM3349.90 541.70H3354.00V558.40H3349.90ZM3349.90 566.45H3354.00V583.15H3349.90ZM3349.90 591.20H3354.00V607.90H3349.90ZM3349.90 615.95H3354.00V632.65H3349.90ZM3349.90 640.70H3354.00V657.40H3349.90ZM3349.90 665.45H3354.00V682.15H3349.90ZM3349.90 690.20H3354.00V706.90H3349.90ZM3349.90 714.95H3354.00V731.65H3349.90ZM3349.90 739.70H3354.00V756.40H3349.90ZM3349.90 764.45H3354.00V781.15H3349.90ZM3349.90 789.20H3354.00V805.90H3349.90ZM3349.90 813.95H3354.00V830.65H3349.90ZM3349.90 838.70H3354.00V855.40H3349.90ZM3349.90 863.45H3354.00V880.15H3349.90ZM3349.90 888.20H3354.00V904.90H3349.90ZM3349.90 912.95H3354.00V929.65H3349.90ZM3349.90 937.70H3354.00V954.40H3349.90ZM3349.90 962.45H3354.00V979.15H3349.90ZM3349.90 987.20H3354.00V1003.90H3349.90ZM3349.90 1011.95H3354.00V1028.65H3349.90ZM3349.90 1036.70H3354.00V1053.40H3349.90ZM3349.90 1061.45H3354.00V1078.15H3349.90ZM3349.90 1086.20H3354.00V1102.90H3349.90ZM3349.90 1110.95H3354.00V1127.65H3349.90ZM3349.90 1135.70H3354.00V1152.40H3349.90ZM3349.90 1160.45H3354.00V1177.15H3349.90ZM3349.90 1185.20H3354.00V1201.90H3349.90ZM3349.90 1209.95H3354.00V1226.65H3349.90ZM3349.90 1234.70H3354.00V1251.40H3349.90ZM3349.90 1259.45H3354.00V1276.15H3349.90ZM3349.90 1284.20H3354.00V1300.90H3349.90ZM3349.90 1308.95H3354.00V1325.65H3349.90ZM3349.90 1333.70H3354.00V1350.40H3349.90ZM3349.90 1358.45H3354.00V1375.15H3349.90ZM3349.90 1383.20H3354.00V1399.90H3349.90ZM3349.90 1407.95H3354.00V1424.65H3349.90ZM3349.90 1432.70H3354.00V1449.40H3349.90ZM3349.90 1457.45H3354.00V1474.15H3349.90ZM3349.90 1482.20H3354.00V1498.90H3349.90ZM3349.90 1506.95H3354.00V1523.65H3349.90ZM3349.90 1531.70H3354.00V1548.40H3349.90ZM3349.90 1556.45H3354.00V1573.15H3349.90ZM3349.90 1581.20H3354.00V1597.90H3349.90ZM3349.90 1605.95H3354.00V1622.65H3349.90ZM3349.90 1630.70H3354.00V1647.40H3349.90ZM3349.90 1655.45H3354.00V1672.15H3349.90ZM3349.90 1680.20H3354.00V1696.90H3349.90ZM3349.90 1704.95H3354.00V1721.65H3349.90ZM3349.90 1729.70H3354.00V1746.40H3349.90ZM3349.90 1754.45H3354.00V1771.15H3349.90ZM3349.90 1779.20H3354.00V1795.90H3349.90ZM3349.90 1803.95H3354.00V1820.65H3349.90ZM3349.90 1828.70H3354.00V1845.40H3349.90Z"/></svg>
<div class="b" style="left:1256.3px;top:330.8px;width:165.2px;height:165.8px;background:#5f9d55;border:1.8px solid #6a6a6e;border-radius:8.5px;box-sizing:border-box;box-shadow:0 3px 6px rgba(0,0,0,0.45)"></div>
<div class="t" style="left:1319.85px;top:364.00px;font-size:34.5px;line-height:34.5px;color:#ffffff;font-weight:700;letter-spacing:-2.200px;">T1</div>
<div class="b" style="left:1301.30px;top:440.40px;width:15.8px;height:15.8px;border-radius:50%;border:2.5px solid #f6f5f1;box-sizing:border-box"></div>
<div class="b" style="left:1321.10px;top:440.40px;width:15.8px;height:15.8px;border-radius:50%;border:2.5px solid #f6f5f1;box-sizing:border-box"></div>
<div class="b" style="left:1340.90px;top:440.40px;width:15.8px;height:15.8px;border-radius:50%;border:2.5px solid #f6f5f1;box-sizing:border-box"></div>
<div class="b" style="left:1360.70px;top:440.40px;width:15.8px;height:15.8px;border-radius:50%;border:2.5px solid #f6f5f1;box-sizing:border-box"></div>
<div class="b" style="left:1590px;top:327.5px;width:165.5px;height:165px;background:#5f9d55;border:1.8px solid #6a6a6e;border-radius:8.5px;box-sizing:border-box;box-shadow:0 3px 6px rgba(0,0,0,0.45)"></div>
<div class="t" style="left:1653.70px;top:360.30px;font-size:34.5px;line-height:34.5px;color:#ffffff;font-weight:700;letter-spacing:-2.200px;">T2</div>
<div class="b" style="left:1635.15px;top:436.70px;width:15.8px;height:15.8px;border-radius:50%;border:2.5px solid #f6f5f1;box-sizing:border-box"></div>
<div class="b" style="left:1654.95px;top:436.70px;width:15.8px;height:15.8px;border-radius:50%;border:2.5px solid #f6f5f1;box-sizing:border-box"></div>
<div class="b" style="left:1674.75px;top:436.70px;width:15.8px;height:15.8px;border-radius:50%;border:2.5px solid #f6f5f1;box-sizing:border-box"></div>
<div class="b" style="left:1694.55px;top:436.70px;width:15.8px;height:15.8px;border-radius:50%;border:2.5px solid #f6f5f1;box-sizing:border-box"></div>
<div class="b" style="left:1916px;top:327.5px;width:165.5px;height:165px;background:#5f9d55;border:1.8px solid #6a6a6e;border-radius:8.5px;box-sizing:border-box;box-shadow:0 3px 6px rgba(0,0,0,0.45)"></div>
<div class="t" style="left:1979.70px;top:360.30px;font-size:34.5px;line-height:34.5px;color:#ffffff;font-weight:700;letter-spacing:-2.200px;">T3</div>
<div class="b" style="left:1961.15px;top:436.70px;width:15.8px;height:15.8px;border-radius:50%;border:2.5px solid #f6f5f1;box-sizing:border-box"></div>
<div class="b" style="left:1980.95px;top:436.70px;width:15.8px;height:15.8px;border-radius:50%;border:2.5px solid #f6f5f1;box-sizing:border-box"></div>
<div class="b" style="left:2000.75px;top:436.70px;width:15.8px;height:15.8px;border-radius:50%;border:2.5px solid #f6f5f1;box-sizing:border-box"></div>
<div class="b" style="left:2020.55px;top:436.70px;width:15.8px;height:15.8px;border-radius:50%;border:2.5px solid #f6f5f1;box-sizing:border-box"></div>
<div class="b" style="left:2248px;top:325px;width:166px;height:166px;background:#cb4b3d;border:1.8px solid #6a6a6e;border-radius:8.5px;box-sizing:border-box;box-shadow:0 3px 6px rgba(0,0,0,0.45)"></div>
<div class="t" style="left:2311.95px;top:358.30px;font-size:34.5px;line-height:34.5px;color:#ffffff;font-weight:700;letter-spacing:-2.200px;">T4</div>
<div class="b" style="left:2293.50px;top:434.80px;width:15.6px;height:15.6px;border-radius:50%;background:#f7e4e2"></div>
<div class="b" style="left:2313.30px;top:434.80px;width:15.6px;height:15.6px;border-radius:50%;background:#f7e4e2"></div>
<div class="b" style="left:2333.10px;top:434.80px;width:15.6px;height:15.6px;border-radius:50%;background:#f7e4e2"></div>
<div class="b" style="left:2352.80px;top:434.70px;width:15.8px;height:15.8px;border-radius:50%;border:2.5px solid #f6f5f1;box-sizing:border-box"></div>
<div class="b" style="left:1256.5px;top:655.5px;width:165px;height:165px;background:#5f9d55;border:1.8px solid #6a6a6e;border-radius:8.5px;box-sizing:border-box;box-shadow:0 3px 6px rgba(0,0,0,0.45)"></div>
<div class="t" style="left:1319.95px;top:688.30px;font-size:34.5px;line-height:34.5px;color:#ffffff;font-weight:700;letter-spacing:-2.200px;">T5</div>
<div class="b" style="left:1301.40px;top:764.70px;width:15.8px;height:15.8px;border-radius:50%;border:2.5px solid #f6f5f1;box-sizing:border-box"></div>
<div class="b" style="left:1321.20px;top:764.70px;width:15.8px;height:15.8px;border-radius:50%;border:2.5px solid #f6f5f1;box-sizing:border-box"></div>
<div class="b" style="left:1341.00px;top:764.70px;width:15.8px;height:15.8px;border-radius:50%;border:2.5px solid #f6f5f1;box-sizing:border-box"></div>
<div class="b" style="left:1360.80px;top:764.70px;width:15.8px;height:15.8px;border-radius:50%;border:2.5px solid #f6f5f1;box-sizing:border-box"></div>
<div class="b" style="left:1586px;top:657.5px;width:165.5px;height:165.5px;background:#cb4b3d;border:1.8px solid #6a6a6e;border-radius:8.5px;box-sizing:border-box;box-shadow:0 3px 6px rgba(0,0,0,0.45)"></div>
<div class="t" style="left:1649.70px;top:690.55px;font-size:34.5px;line-height:34.5px;color:#ffffff;font-weight:700;letter-spacing:-2.200px;">T6</div>
<div class="b" style="left:1631.25px;top:767.05px;width:15.6px;height:15.6px;border-radius:50%;background:#f7e4e2"></div>
<div class="b" style="left:1651.05px;top:767.05px;width:15.6px;height:15.6px;border-radius:50%;background:#f7e4e2"></div>
<div class="b" style="left:1670.85px;top:767.05px;width:15.6px;height:15.6px;border-radius:50%;background:#f7e4e2"></div>
<div class="b" style="left:1690.55px;top:766.95px;width:15.8px;height:15.8px;border-radius:50%;border:2.5px solid #f6f5f1;box-sizing:border-box"></div>
<div class="b" style="left:1916px;top:653.5px;width:165.5px;height:165.5px;background:#cb4b3d;border:1.8px solid #6a6a6e;border-radius:8.5px;box-sizing:border-box;box-shadow:0 3px 6px rgba(0,0,0,0.45)"></div>
<div class="t" style="left:1979.70px;top:686.55px;font-size:34.5px;line-height:34.5px;color:#ffffff;font-weight:700;letter-spacing:-2.200px;">T7</div>
<div class="b" style="left:1961.25px;top:763.05px;width:15.6px;height:15.6px;border-radius:50%;background:#f7e4e2"></div>
<div class="b" style="left:1981.05px;top:763.05px;width:15.6px;height:15.6px;border-radius:50%;background:#f7e4e2"></div>
<div class="b" style="left:2000.85px;top:763.05px;width:15.6px;height:15.6px;border-radius:50%;background:#f7e4e2"></div>
<div class="b" style="left:2020.55px;top:762.95px;width:15.8px;height:15.8px;border-radius:50%;border:2.5px solid #f6f5f1;box-sizing:border-box"></div>
<div class="b" style="left:2250.5px;top:660px;width:165px;height:165px;background:#5f9d55;border:1.8px solid #6a6a6e;border-radius:8.5px;box-sizing:border-box;box-shadow:0 3px 6px rgba(0,0,0,0.45)"></div>
<div class="t" style="left:2313.95px;top:692.80px;font-size:34.5px;line-height:34.5px;color:#ffffff;font-weight:700;letter-spacing:-2.200px;">T8</div>
<div class="b" style="left:2295.40px;top:769.20px;width:15.8px;height:15.8px;border-radius:50%;border:2.5px solid #f6f5f1;box-sizing:border-box"></div>
<div class="b" style="left:2315.20px;top:769.20px;width:15.8px;height:15.8px;border-radius:50%;border:2.5px solid #f6f5f1;box-sizing:border-box"></div>
<div class="b" style="left:2335.00px;top:769.20px;width:15.8px;height:15.8px;border-radius:50%;border:2.5px solid #f6f5f1;box-sizing:border-box"></div>
<div class="b" style="left:2354.80px;top:769.20px;width:15.8px;height:15.8px;border-radius:50%;border:2.5px solid #f6f5f1;box-sizing:border-box"></div>
<div class="b" style="left:1256.5px;top:989px;width:165px;height:165px;background:#5f9d55;border:1.8px solid #6a6a6e;border-radius:8.5px;box-sizing:border-box;box-shadow:0 3px 6px rgba(0,0,0,0.45)"></div>
<div class="t" style="left:1319.95px;top:1021.80px;font-size:34.5px;line-height:34.5px;color:#ffffff;font-weight:700;letter-spacing:-2.200px;">T9</div>
<div class="b" style="left:1301.40px;top:1098.20px;width:15.8px;height:15.8px;border-radius:50%;border:2.5px solid #f6f5f1;box-sizing:border-box"></div>
<div class="b" style="left:1321.20px;top:1098.20px;width:15.8px;height:15.8px;border-radius:50%;border:2.5px solid #f6f5f1;box-sizing:border-box"></div>
<div class="b" style="left:1341.00px;top:1098.20px;width:15.8px;height:15.8px;border-radius:50%;border:2.5px solid #f6f5f1;box-sizing:border-box"></div>
<div class="b" style="left:1360.80px;top:1098.20px;width:15.8px;height:15.8px;border-radius:50%;border:2.5px solid #f6f5f1;box-sizing:border-box"></div>
<div class="b" style="left:1588px;top:987px;width:165.5px;height:165px;background:#5f9d55;border:1.8px solid #6a6a6e;border-radius:8.5px;box-sizing:border-box;box-shadow:0 3px 6px rgba(0,0,0,0.45)"></div>
<div class="t" style="left:1643.25px;top:1019.80px;font-size:34.5px;line-height:34.5px;color:#ffffff;font-weight:700;letter-spacing:-2.200px;">T10</div>
<div class="b" style="left:1633.15px;top:1096.20px;width:15.8px;height:15.8px;border-radius:50%;border:2.5px solid #f6f5f1;box-sizing:border-box"></div>
<div class="b" style="left:1652.95px;top:1096.20px;width:15.8px;height:15.8px;border-radius:50%;border:2.5px solid #f6f5f1;box-sizing:border-box"></div>
<div class="b" style="left:1672.75px;top:1096.20px;width:15.8px;height:15.8px;border-radius:50%;border:2.5px solid #f6f5f1;box-sizing:border-box"></div>
<div class="b" style="left:1692.55px;top:1096.20px;width:15.8px;height:15.8px;border-radius:50%;border:2.5px solid #f6f5f1;box-sizing:border-box"></div>
<div class="b" style="left:1916px;top:991px;width:165.5px;height:165px;background:#5f9d55;border:1.8px solid #6a6a6e;border-radius:8.5px;box-sizing:border-box;box-shadow:0 3px 6px rgba(0,0,0,0.45)"></div>
<div class="t" style="left:1972.20px;top:1023.80px;font-size:34.5px;line-height:34.5px;color:#ffffff;font-weight:700;letter-spacing:-2.200px;">T11</div>
<div class="b" style="left:1961.15px;top:1100.20px;width:15.8px;height:15.8px;border-radius:50%;border:2.5px solid #f6f5f1;box-sizing:border-box"></div>
<div class="b" style="left:1980.95px;top:1100.20px;width:15.8px;height:15.8px;border-radius:50%;border:2.5px solid #f6f5f1;box-sizing:border-box"></div>
<div class="b" style="left:2000.75px;top:1100.20px;width:15.8px;height:15.8px;border-radius:50%;border:2.5px solid #f6f5f1;box-sizing:border-box"></div>
<div class="b" style="left:2020.55px;top:1100.20px;width:15.8px;height:15.8px;border-radius:50%;border:2.5px solid #f6f5f1;box-sizing:border-box"></div>
<div class="b" style="left:2248px;top:987px;width:166px;height:165.5px;background:#5f9d55;border:1.8px solid #6a6a6e;border-radius:8.5px;box-sizing:border-box;box-shadow:0 3px 6px rgba(0,0,0,0.45)"></div>
<div class="t" style="left:2303.50px;top:1020.05px;font-size:34.5px;line-height:34.5px;color:#ffffff;font-weight:700;letter-spacing:-2.200px;">T12</div>
<div class="b" style="left:2293.40px;top:1096.45px;width:15.8px;height:15.8px;border-radius:50%;border:2.5px solid #f6f5f1;box-sizing:border-box"></div>
<div class="b" style="left:2313.20px;top:1096.45px;width:15.8px;height:15.8px;border-radius:50%;border:2.5px solid #f6f5f1;box-sizing:border-box"></div>
<div class="b" style="left:2333.00px;top:1096.45px;width:15.8px;height:15.8px;border-radius:50%;border:2.5px solid #f6f5f1;box-sizing:border-box"></div>
<div class="b" style="left:2352.80px;top:1096.45px;width:15.8px;height:15.8px;border-radius:50%;border:2.5px solid #f6f5f1;box-sizing:border-box"></div>
<div class="b" style="left:1258.5px;top:1321.5px;width:165px;height:165px;background:#5f9d55;border:1.8px solid #6a6a6e;border-radius:8.5px;box-sizing:border-box;box-shadow:0 3px 6px rgba(0,0,0,0.45)"></div>
<div class="t" style="left:1313.50px;top:1354.30px;font-size:34.5px;line-height:34.5px;color:#ffffff;font-weight:700;letter-spacing:-2.200px;">T13</div>
<div class="b" style="left:1303.40px;top:1430.70px;width:15.8px;height:15.8px;border-radius:50%;border:2.5px solid #f6f5f1;box-sizing:border-box"></div>
<div class="b" style="left:1323.20px;top:1430.70px;width:15.8px;height:15.8px;border-radius:50%;border:2.5px solid #f6f5f1;box-sizing:border-box"></div>
<div class="b" style="left:1343.00px;top:1430.70px;width:15.8px;height:15.8px;border-radius:50%;border:2.5px solid #f6f5f1;box-sizing:border-box"></div>
<div class="b" style="left:1362.80px;top:1430.70px;width:15.8px;height:15.8px;border-radius:50%;border:2.5px solid #f6f5f1;box-sizing:border-box"></div>
<div class="b" style="left:1584.5px;top:1318px;width:165px;height:165px;background:#5f9d55;border:1.8px solid #6a6a6e;border-radius:8.5px;box-sizing:border-box;box-shadow:0 3px 6px rgba(0,0,0,0.45)"></div>
<div class="t" style="left:1639.50px;top:1350.80px;font-size:34.5px;line-height:34.5px;color:#ffffff;font-weight:700;letter-spacing:-2.200px;">T14</div>
<div class="b" style="left:1629.40px;top:1427.20px;width:15.8px;height:15.8px;border-radius:50%;border:2.5px solid #f6f5f1;box-sizing:border-box"></div>
<div class="b" style="left:1649.20px;top:1427.20px;width:15.8px;height:15.8px;border-radius:50%;border:2.5px solid #f6f5f1;box-sizing:border-box"></div>
<div class="b" style="left:1669.00px;top:1427.20px;width:15.8px;height:15.8px;border-radius:50%;border:2.5px solid #f6f5f1;box-sizing:border-box"></div>
<div class="b" style="left:1688.80px;top:1427.20px;width:15.8px;height:15.8px;border-radius:50%;border:2.5px solid #f6f5f1;box-sizing:border-box"></div>
<div class="b" style="left:1918px;top:1321.5px;width:165.5px;height:165px;background:#5f9d55;border:1.8px solid #6a6a6e;border-radius:8.5px;box-sizing:border-box;box-shadow:0 3px 6px rgba(0,0,0,0.45)"></div>
<div class="t" style="left:1973.25px;top:1354.30px;font-size:34.5px;line-height:34.5px;color:#ffffff;font-weight:700;letter-spacing:-2.200px;">T15</div>
<div class="b" style="left:1963.15px;top:1430.70px;width:15.8px;height:15.8px;border-radius:50%;border:2.5px solid #f6f5f1;box-sizing:border-box"></div>
<div class="b" style="left:1982.95px;top:1430.70px;width:15.8px;height:15.8px;border-radius:50%;border:2.5px solid #f6f5f1;box-sizing:border-box"></div>
<div class="b" style="left:2002.75px;top:1430.70px;width:15.8px;height:15.8px;border-radius:50%;border:2.5px solid #f6f5f1;box-sizing:border-box"></div>
<div class="b" style="left:2022.55px;top:1430.70px;width:15.8px;height:15.8px;border-radius:50%;border:2.5px solid #f6f5f1;box-sizing:border-box"></div>
<div class="b" style="left:2250.5px;top:1320px;width:165px;height:165px;background:#cb4b3d;border:1.8px solid #6a6a6e;border-radius:8.5px;box-sizing:border-box;box-shadow:0 3px 6px rgba(0,0,0,0.45)"></div>
<div class="t" style="left:2305.50px;top:1352.80px;font-size:34.5px;line-height:34.5px;color:#ffffff;font-weight:700;letter-spacing:-2.200px;">T16</div>
<div class="b" style="left:2295.50px;top:1429.30px;width:15.6px;height:15.6px;border-radius:50%;background:#f7e4e2"></div>
<div class="b" style="left:2315.30px;top:1429.30px;width:15.6px;height:15.6px;border-radius:50%;background:#f7e4e2"></div>
<div class="b" style="left:2335.10px;top:1429.30px;width:15.6px;height:15.6px;border-radius:50%;background:#f7e4e2"></div>
<div class="b" style="left:2354.80px;top:1429.20px;width:15.8px;height:15.8px;border-radius:50%;border:2.5px solid #f6f5f1;box-sizing:border-box"></div>
<div class="b" style="left:1259px;top:1565px;width:495.5px;height:165px;background:#cb4b3d;border:1.8px solid #6a6a6e;border-radius:8.5px;box-sizing:border-box;box-shadow:0 3px 6px rgba(0,0,0,0.45)"></div>
<div class="t" style="left:1479.25px;top:1597.80px;font-size:34.5px;line-height:34.5px;color:#ffffff;font-weight:700;letter-spacing:-2.200px;">T17</div>
<div class="b" style="left:1469.25px;top:1663.80px;width:15.6px;height:15.6px;border-radius:50%;background:#f7e4e2"></div>
<div class="b" style="left:1489.05px;top:1663.80px;width:15.6px;height:15.6px;border-radius:50%;background:#f7e4e2"></div>
<div class="b" style="left:1508.85px;top:1663.80px;width:15.6px;height:15.6px;border-radius:50%;background:#f7e4e2"></div>
<div class="b" style="left:1528.65px;top:1663.80px;width:15.6px;height:15.6px;border-radius:50%;background:#f7e4e2"></div>
<div class="b" style="left:1489.05px;top:1683.80px;width:15.6px;height:15.6px;border-radius:50%;background:#f7e4e2"></div>
<div class="b" style="left:1508.75px;top:1683.70px;width:15.8px;height:15.8px;border-radius:50%;border:2.5px solid #f6f5f1;box-sizing:border-box"></div>
<div class="b" style="left:1921px;top:1565.5px;width:495.5px;height:164.5px;background:#5f9d55;border:1.8px solid #6a6a6e;border-radius:8.5px;box-sizing:border-box;box-shadow:0 3px 6px rgba(0,0,0,0.45)"></div>
<div class="t" style="left:2141.25px;top:1598.05px;font-size:34.5px;line-height:34.5px;color:#ffffff;font-weight:700;letter-spacing:-2.200px;">T18</div>
<div class="b" style="left:2131.15px;top:1663.95px;width:15.8px;height:15.8px;border-radius:50%;border:2.5px solid #f6f5f1;box-sizing:border-box"></div>
<div class="b" style="left:2150.95px;top:1663.95px;width:15.8px;height:15.8px;border-radius:50%;border:2.5px solid #f6f5f1;box-sizing:border-box"></div>
<div class="b" style="left:2170.75px;top:1663.95px;width:15.8px;height:15.8px;border-radius:50%;border:2.5px solid #f6f5f1;box-sizing:border-box"></div>
<div class="b" style="left:2190.55px;top:1663.95px;width:15.8px;height:15.8px;border-radius:50%;border:2.5px solid #f6f5f1;box-sizing:border-box"></div>
<div class="b" style="left:2150.95px;top:1683.95px;width:15.8px;height:15.8px;border-radius:50%;border:2.5px solid #f6f5f1;box-sizing:border-box"></div>
<div class="b" style="left:2170.75px;top:1683.95px;width:15.8px;height:15.8px;border-radius:50%;border:2.5px solid #f6f5f1;box-sizing:border-box"></div>
<div class="b" style="left:2739px;top:1579.5px;width:495.5px;height:164.5px;background:#5f9d55;border:1.8px solid #6a6a6e;border-radius:8.5px;box-sizing:border-box;box-shadow:0 3px 6px rgba(0,0,0,0.45)"></div>
<div class="t" style="left:2959.25px;top:1612.05px;font-size:34.5px;line-height:34.5px;color:#ffffff;font-weight:700;letter-spacing:-2.200px;">T19</div>
<div class="b" style="left:2949.15px;top:1677.95px;width:15.8px;height:15.8px;border-radius:50%;border:2.5px solid #f6f5f1;box-sizing:border-box"></div>
<div class="b" style="left:2968.95px;top:1677.95px;width:15.8px;height:15.8px;border-radius:50%;border:2.5px solid #f6f5f1;box-sizing:border-box"></div>
<div class="b" style="left:2988.75px;top:1677.95px;width:15.8px;height:15.8px;border-radius:50%;border:2.5px solid #f6f5f1;box-sizing:border-box"></div>
<div class="b" style="left:3008.55px;top:1677.95px;width:15.8px;height:15.8px;border-radius:50%;border:2.5px solid #f6f5f1;box-sizing:border-box"></div>
<div class="b" style="left:2968.95px;top:1697.95px;width:15.8px;height:15.8px;border-radius:50%;border:2.5px solid #f6f5f1;box-sizing:border-box"></div>
<div class="b" style="left:2988.75px;top:1697.95px;width:15.8px;height:15.8px;border-radius:50%;border:2.5px solid #f6f5f1;box-sizing:border-box"></div>
<div class="b" style="left:2578.5px;top:984px;width:165px;height:495px;background:#5f9d55;border:1.8px solid #6a6a6e;border-radius:8.5px;box-sizing:border-box;box-shadow:0 3px 6px rgba(0,0,0,0.45)"></div>
<div class="t" style="left:2633.50px;top:1181.80px;font-size:34.5px;line-height:34.5px;color:#ffffff;font-weight:700;letter-spacing:-2.200px;">T20</div>
<div class="b" style="left:2623.40px;top:1247.70px;width:15.8px;height:15.8px;border-radius:50%;border:2.5px solid #f6f5f1;box-sizing:border-box"></div>
<div class="b" style="left:2643.20px;top:1247.70px;width:15.8px;height:15.8px;border-radius:50%;border:2.5px solid #f6f5f1;box-sizing:border-box"></div>
<div class="b" style="left:2663.00px;top:1247.70px;width:15.8px;height:15.8px;border-radius:50%;border:2.5px solid #f6f5f1;box-sizing:border-box"></div>
<div class="b" style="left:2682.80px;top:1247.70px;width:15.8px;height:15.8px;border-radius:50%;border:2.5px solid #f6f5f1;box-sizing:border-box"></div>
<div class="b" style="left:2643.20px;top:1267.70px;width:15.8px;height:15.8px;border-radius:50%;border:2.5px solid #f6f5f1;box-sizing:border-box"></div>
<div class="b" style="left:2663.00px;top:1267.70px;width:15.8px;height:15.8px;border-radius:50%;border:2.5px solid #f6f5f1;box-sizing:border-box"></div>
<div class="b" style="left:2580.5px;top:324.5px;width:165px;height:495px;background:#5f9d55;border:1.8px solid #6a6a6e;border-radius:8.5px;box-sizing:border-box;box-shadow:0 3px 6px rgba(0,0,0,0.45)"></div>
<div class="t" style="left:2635.50px;top:522.30px;font-size:34.5px;line-height:34.5px;color:#ffffff;font-weight:700;letter-spacing:-2.200px;">T21</div>
<div class="b" style="left:2625.40px;top:588.20px;width:15.8px;height:15.8px;border-radius:50%;border:2.5px solid #f6f5f1;box-sizing:border-box"></div>
<div class="b" style="left:2645.20px;top:588.20px;width:15.8px;height:15.8px;border-radius:50%;border:2.5px solid #f6f5f1;box-sizing:border-box"></div>
<div class="b" style="left:2665.00px;top:588.20px;width:15.8px;height:15.8px;border-radius:50%;border:2.5px solid #f6f5f1;box-sizing:border-box"></div>
<div class="b" style="left:2684.80px;top:588.20px;width:15.8px;height:15.8px;border-radius:50%;border:2.5px solid #f6f5f1;box-sizing:border-box"></div>
<div class="b" style="left:2645.20px;top:608.20px;width:15.8px;height:15.8px;border-radius:50%;border:2.5px solid #f6f5f1;box-sizing:border-box"></div>
<div class="b" style="left:2665.00px;top:608.20px;width:15.8px;height:15.8px;border-radius:50%;border:2.5px solid #f6f5f1;box-sizing:border-box"></div>
<div class="b" style="left:2908px;top:328.5px;width:166px;height:166.5px;background:#5f9d55;border:1.8px solid #6a6a6e;border-radius:50%;box-sizing:border-box;box-shadow:0 3px 6px rgba(0,0,0,0.45)"></div>
<div class="t" style="left:2963.50px;top:362.05px;font-size:34.5px;line-height:34.5px;color:#ffffff;font-weight:700;letter-spacing:-2.200px;">T22</div>
<div class="b" style="left:2953.40px;top:438.45px;width:15.8px;height:15.8px;border-radius:50%;border:2.5px solid #f6f5f1;box-sizing:border-box"></div>
<div class="b" style="left:2973.20px;top:438.45px;width:15.8px;height:15.8px;border-radius:50%;border:2.5px solid #f6f5f1;box-sizing:border-box"></div>
<div class="b" style="left:2993.00px;top:438.45px;width:15.8px;height:15.8px;border-radius:50%;border:2.5px solid #f6f5f1;box-sizing:border-box"></div>
<div class="b" style="left:3012.80px;top:438.45px;width:15.8px;height:15.8px;border-radius:50%;border:2.5px solid #f6f5f1;box-sizing:border-box"></div>
<div class="b" style="left:3154px;top:491px;width:166px;height:165.5px;background:#5f9d55;border:1.8px solid #6a6a6e;border-radius:50%;box-sizing:border-box;box-shadow:0 3px 6px rgba(0,0,0,0.45)"></div>
<div class="t" style="left:3209.50px;top:524.05px;font-size:34.5px;line-height:34.5px;color:#ffffff;font-weight:700;letter-spacing:-2.200px;">T23</div>
<div class="b" style="left:3199.40px;top:600.45px;width:15.8px;height:15.8px;border-radius:50%;border:2.5px solid #f6f5f1;box-sizing:border-box"></div>
<div class="b" style="left:3219.20px;top:600.45px;width:15.8px;height:15.8px;border-radius:50%;border:2.5px solid #f6f5f1;box-sizing:border-box"></div>
<div class="b" style="left:3239.00px;top:600.45px;width:15.8px;height:15.8px;border-radius:50%;border:2.5px solid #f6f5f1;box-sizing:border-box"></div>
<div class="b" style="left:3258.80px;top:600.45px;width:15.8px;height:15.8px;border-radius:50%;border:2.5px solid #f6f5f1;box-sizing:border-box"></div>
<div class="b" style="left:2916px;top:659px;width:166px;height:166px;background:#cb4b3d;border:1.8px solid #6a6a6e;border-radius:50%;box-sizing:border-box;box-shadow:0 3px 6px rgba(0,0,0,0.45)"></div>
<div class="t" style="left:2971.50px;top:692.30px;font-size:34.5px;line-height:34.5px;color:#ffffff;font-weight:700;letter-spacing:-2.200px;">T24</div>
<div class="b" style="left:2961.50px;top:768.80px;width:15.6px;height:15.6px;border-radius:50%;background:#f7e4e2"></div>
<div class="b" style="left:2981.30px;top:768.80px;width:15.6px;height:15.6px;border-radius:50%;background:#f7e4e2"></div>
<div class="b" style="left:3001.10px;top:768.80px;width:15.6px;height:15.6px;border-radius:50%;background:#f7e4e2"></div>
<div class="b" style="left:3020.90px;top:768.80px;width:15.6px;height:15.6px;border-radius:50%;background:#f7e4e2"></div>
<div class="b" style="left:3148px;top:825px;width:166px;height:165.5px;background:#5f9d55;border:1.8px solid #6a6a6e;border-radius:50%;box-sizing:border-box;box-shadow:0 3px 6px rgba(0,0,0,0.45)"></div>
<div class="t" style="left:3203.50px;top:858.05px;font-size:34.5px;line-height:34.5px;color:#ffffff;font-weight:700;letter-spacing:-2.200px;">T25</div>
<div class="b" style="left:3193.40px;top:934.45px;width:15.8px;height:15.8px;border-radius:50%;border:2.5px solid #f6f5f1;box-sizing:border-box"></div>
<div class="b" style="left:3213.20px;top:934.45px;width:15.8px;height:15.8px;border-radius:50%;border:2.5px solid #f6f5f1;box-sizing:border-box"></div>
<div class="b" style="left:3233.00px;top:934.45px;width:15.8px;height:15.8px;border-radius:50%;border:2.5px solid #f6f5f1;box-sizing:border-box"></div>
<div class="b" style="left:3252.80px;top:934.45px;width:15.8px;height:15.8px;border-radius:50%;border:2.5px solid #f6f5f1;box-sizing:border-box"></div>
<div class="b" style="left:2908px;top:993.5px;width:166px;height:165.5px;background:#5f9d55;border:1.8px solid #6a6a6e;border-radius:50%;box-sizing:border-box;box-shadow:0 3px 6px rgba(0,0,0,0.45)"></div>
<div class="t" style="left:2963.50px;top:1026.55px;font-size:34.5px;line-height:34.5px;color:#ffffff;font-weight:700;letter-spacing:-2.200px;">T26</div>
<div class="b" style="left:2953.40px;top:1102.95px;width:15.8px;height:15.8px;border-radius:50%;border:2.5px solid #f6f5f1;box-sizing:border-box"></div>
<div class="b" style="left:2973.20px;top:1102.95px;width:15.8px;height:15.8px;border-radius:50%;border:2.5px solid #f6f5f1;box-sizing:border-box"></div>
<div class="b" style="left:2993.00px;top:1102.95px;width:15.8px;height:15.8px;border-radius:50%;border:2.5px solid #f6f5f1;box-sizing:border-box"></div>
<div class="b" style="left:3012.80px;top:1102.95px;width:15.8px;height:15.8px;border-radius:50%;border:2.5px solid #f6f5f1;box-sizing:border-box"></div>
<div class="b" style="left:3150px;top:1157px;width:166px;height:166px;background:#5f9d55;border:1.8px solid #6a6a6e;border-radius:50%;box-sizing:border-box;box-shadow:0 3px 6px rgba(0,0,0,0.45)"></div>
<div class="t" style="left:3205.50px;top:1190.30px;font-size:34.5px;line-height:34.5px;color:#ffffff;font-weight:700;letter-spacing:-2.200px;">T27</div>
<div class="b" style="left:3195.40px;top:1266.70px;width:15.8px;height:15.8px;border-radius:50%;border:2.5px solid #f6f5f1;box-sizing:border-box"></div>
<div class="b" style="left:3215.20px;top:1266.70px;width:15.8px;height:15.8px;border-radius:50%;border:2.5px solid #f6f5f1;box-sizing:border-box"></div>
<div class="b" style="left:3235.00px;top:1266.70px;width:15.8px;height:15.8px;border-radius:50%;border:2.5px solid #f6f5f1;box-sizing:border-box"></div>
<div class="b" style="left:3254.80px;top:1266.70px;width:15.8px;height:15.8px;border-radius:50%;border:2.5px solid #f6f5f1;box-sizing:border-box"></div>
<div class="b" style="left:2904px;top:1323px;width:166px;height:166px;background:#cb4b3d;border:1.8px solid #6a6a6e;border-radius:50%;box-sizing:border-box;box-shadow:0 3px 6px rgba(0,0,0,0.45)"></div>
<div class="t" style="left:2959.50px;top:1356.30px;font-size:34.5px;line-height:34.5px;color:#ffffff;font-weight:700;letter-spacing:-2.200px;">T28</div>
<div class="b" style="left:2949.50px;top:1432.80px;width:15.6px;height:15.6px;border-radius:50%;background:#f7e4e2"></div>
<div class="b" style="left:2969.30px;top:1432.80px;width:15.6px;height:15.6px;border-radius:50%;background:#f7e4e2"></div>
<div class="b" style="left:2989.10px;top:1432.80px;width:15.6px;height:15.6px;border-radius:50%;background:#f7e4e2"></div>
<div class="b" style="left:3008.90px;top:1432.80px;width:15.6px;height:15.6px;border-radius:50%;background:#f7e4e2"></div>
<div class="b" style="left:2886px;top:1953px;width:78px;height:77.5px;background:#2a2a33;border-radius:18px"></div>
<svg class="ic" style="left:2908.00px;top:1974.80px;" width="34" height="34" viewBox="0 0 24 24" fill="none" stroke="#eeeeee" stroke-width="2" stroke-linecap="round" stroke-linejoin="round"><circle cx="11" cy="11" r="8"/><line x1="21" x2="16.65" y1="21" y2="16.65"/><line x1="8" x2="14" y1="11" y2="11"/></svg>
<div class="b" style="left:2980px;top:1953px;width:78px;height:77.5px;background:#2a2a33;border-radius:18px"></div>
<svg class="ic" style="left:3002.00px;top:1974.80px;" width="34" height="34" viewBox="0 0 24 24" fill="none" stroke="#eeeeee" stroke-width="2" stroke-linecap="round" stroke-linejoin="round"><polyline points="15 3 21 3 21 9"/><polyline points="9 21 3 21 3 15"/><line x1="21" x2="14" y1="3" y2="10"/><line x1="3" x2="10" y1="21" y2="14"/></svg>
<div class="b" style="left:3074px;top:1953px;width:78px;height:77.5px;background:#2a2a33;border-radius:18px"></div>
<svg class="ic" style="left:3096.00px;top:1974.80px;" width="34" height="34" viewBox="0 0 24 24" fill="none" stroke="#eeeeee" stroke-width="2" stroke-linecap="round" stroke-linejoin="round"><circle cx="11" cy="11" r="8"/><line x1="21" x2="16.65" y1="21" y2="16.65"/><line x1="11" x2="11" y1="8" y2="14"/><line x1="8" x2="14" y1="11" y2="11"/></svg>
<div class="b" style="left:3168px;top:1953px;width:78px;height:77.5px;background:#2a2a33;border-radius:18px"></div>
<svg class="ic" style="left:3190.00px;top:1974.80px;" width="34" height="34" viewBox="0 0 24 24" fill="none" stroke="#eeeeee" stroke-width="2" stroke-linecap="round" stroke-linejoin="round"><polyline points="5 9 2 12 5 15"/><polyline points="9 5 12 2 15 5"/><polyline points="15 19 12 22 9 19"/><polyline points="19 9 22 12 19 15"/><line x1="2" x2="22" y1="12" y2="12"/><line x1="12" x2="12" y1="2" y2="22"/></svg>
<div class="b" style="left:3261px;top:1953px;width:100px;height:77.5px;background:#040404;border-radius:10px"></div>
<div class="t" style="left:3287.40px;top:1979.94px;font-size:25px;line-height:25px;color:#ffffff;font-weight:400;letter-spacing:-0.750px;-webkit-text-stroke:0.2px #ffffff;">83%</div>
<script>(function(){var w=window.innerWidth;if(w&&Math.abs(w-3456)>2){document.documentElement.style.zoom=(w/3456);}})();</script>
</body></html>
